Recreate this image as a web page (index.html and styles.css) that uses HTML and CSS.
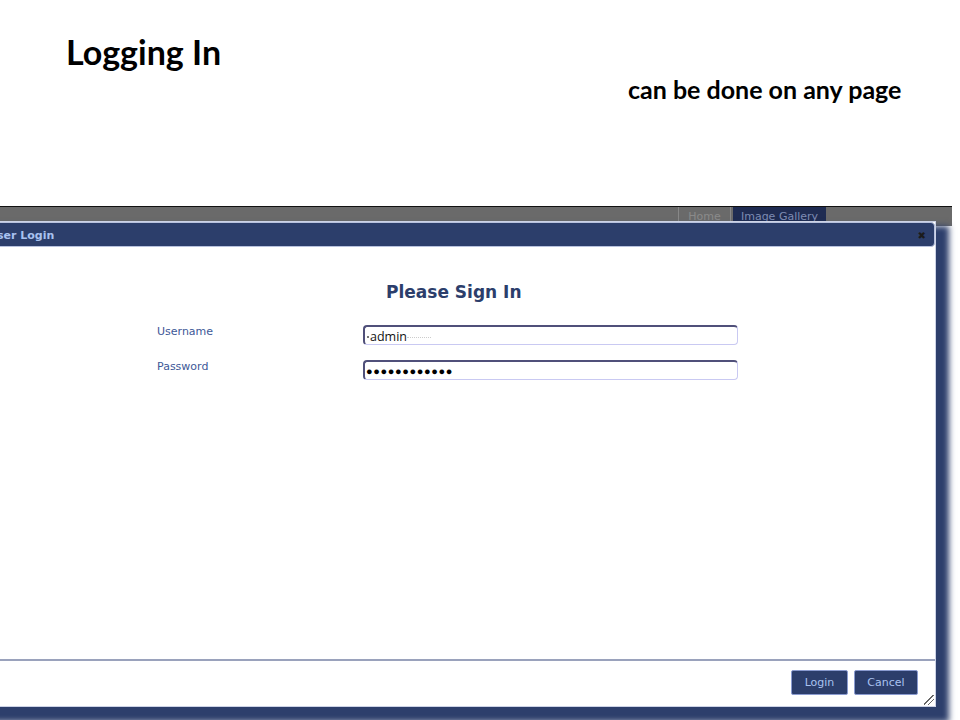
FILE: index.html
```html
<!DOCTYPE html>
<html lang="en">
<head>
  <meta charset="UTF-8">
  <title>Logging In</title>
  <link rel="stylesheet" href="styles.css">
</head>
<body>
  <!-- slide heading -->
  <header class="slide-head">
    <h1 class="slide-title">Logging In</h1>
    <p class="slide-note">can be done on any page</p>
  </header>

  <!-- screenshot of the site with the login dialog open -->
  <div class="shot">
    <div class="site-bar">
      <nav class="site-nav">
        <span class="tab">Home</span>
        <span class="tab tab-on">Image Gallery</span>
      </nav>
    </div>

    <div class="dialog">
      <div class="dialog-bar">
        <span class="dialog-title">User Login</span>
        <span class="dialog-close">&#10006;</span>
      </div>

      <div class="dialog-body">
        <h2 class="sign-title">Please Sign In</h2>
        <div class="form-grid">
          <label class="field-label">Username</label>
          <div class="field"><span class="caret"></span>admin<span class="ghost"></span></div>
          <label class="field-label">Password</label>
          <div class="field field-pass">&#9679;&#9679;&#9679;&#9679;&#9679;&#9679;&#9679;&#9679;&#9679;&#9679;&#9679;&#9679;</div>
        </div>
      </div>

      <div class="dialog-foot">
        <button class="btn">Login</button>
        <button class="btn">Cancel</button>
        <span class="grip"></span>
      </div>
    </div>
  </div>
</body>
</html>
```

FILE: styles.css
```css
/* base */
* {
  box-sizing: border-box;
}
body {
  margin: 0;
  width: 960px;
  height: 720px;
  overflow: hidden;
  background: #fff;
  font-family: "Lato", "Open Sans", sans-serif;
}

/* slide heading */
.slide-head {
  height: 206px;
  padding: 30px 0 0 66px;
}
.slide-title {
  margin: 0;
  font-size: 34px;
  line-height: 44px;
  font-weight: 700;
  color: #000;
}
.slide-note {
  margin: -1px 0 0 562px;
  font-size: 25px;
  line-height: 32px;
  font-weight: 700;
  color: #000;
}

/* site screenshot */
.shot {
  position: relative;
  height: 514px;
  overflow: hidden;
}
.site-bar {
  width: 952px;
  height: 20px;
  background: #6a6a6a;
  border-top: 1px solid #111;
}
.site-nav {
  display: flex;
  padding-left: 678px;
  font-family: "DejaVu Sans", Verdana, sans-serif;
  font-size: 11px;
}
.tab {
  width: 53px;
  height: 19px;
  padding-top: 3px;
  text-align: center;
  color: #8a8a8a;
  border-left: 1px solid #888;
  border-right: 1px solid #888;
}
.tab-on {
  width: 93px;
  margin-left: 2px;
  background: #1f2c52;
  color: #7d8bb3;
  border-color: #1f2c52;
}

/* login dialog */
.dialog {
  position: absolute;
  left: -16px;
  top: 15px;
  width: 952px;
  height: 486px;
  display: flex;
  flex-direction: column;
  background: #fff;
  border: 1px solid #cdd3e6;
  box-shadow: 8px 10px 6px 5px #2d3f6c;
  font-family: "DejaVu Sans", Verdana, sans-serif;
}
.dialog-bar {
  display: flex;
  align-items: center;
  justify-content: space-between;
  height: 25px;
  padding: 1px 8px 0 2px;
  background: #2c3e6b;
  border: 1px solid #b8c2de;
  border-radius: 4px;
}
.dialog-title {
  font-size: 11px;
  font-weight: 700;
  color: #a9c2f0;
}
.dialog-close {
  font-size: 10px;
  color: #1b1b1b;
}

.dialog-body {
  flex: 1;
  padding-top: 35px;
}
.sign-title {
  margin: 0 0 20px 401px;
  font-size: 17px;
  font-weight: 700;
  color: #2c3e6b;
}
.form-grid {
  display: grid;
  grid-template-columns: 206px 375px;
  row-gap: 12px;
  padding-left: 172px;
  align-items: start;
}
.field-label {
  font-size: 11px;
  color: #3d5897;
  padding-top: 3px;
}
.field {
  position: relative;
  height: 20px;
  margin-top: 3px;
  padding: 2px 0 0 5px;
  font-family: "Open Sans", sans-serif;
  font-size: 12.5px;
  line-height: 16px;
  color: #111;
  border: 1px solid #c9c9f2;
  border-top: 2px solid #50507a;
  border-left: 2px solid #50507a;
  border-radius: 4px;
}
.caret {
  position: absolute;
  left: 2px;
  top: 9px;
  width: 2px;
  height: 2px;
  background: #777;
}
.ghost {
  display: inline-block;
  width: 24px;
  border-bottom: 1px dotted #ccc;
  vertical-align: middle;
}
.field-pass {
  font-size: 11px;
  letter-spacing: 0.6px;
  padding-top: 1px;
  padding-left: 1px;
  color: #000;
}

/* dialog buttons */
.dialog-foot {
  position: relative;
  display: flex;
  justify-content: flex-end;
  gap: 6px;
  height: 47px;
  padding: 9px 17px 0 0;
  border-top: 2px solid #9aa2bc;
}
.btn {
  height: 25px;
  padding: 0 10px;
  font-family: "DejaVu Sans", Verdana, sans-serif;
  font-size: 11px;
  color: #a9c2f0;
  background: #2c3e6b;
  border: 1px solid #8a9bd0;
  border-radius: 2px;
}
.btn:first-child {
  width: 57px;
}
.btn:nth-child(2) {
  width: 64px;
}
.grip {
  position: absolute;
  right: 1px;
  bottom: 1px;
  width: 10px;
  height: 10px;
  background: linear-gradient(135deg, transparent 45%, #666 45%, #666 52%, transparent 52%, transparent 68%, #666 68%, #666 75%, transparent 75%);
}
```
